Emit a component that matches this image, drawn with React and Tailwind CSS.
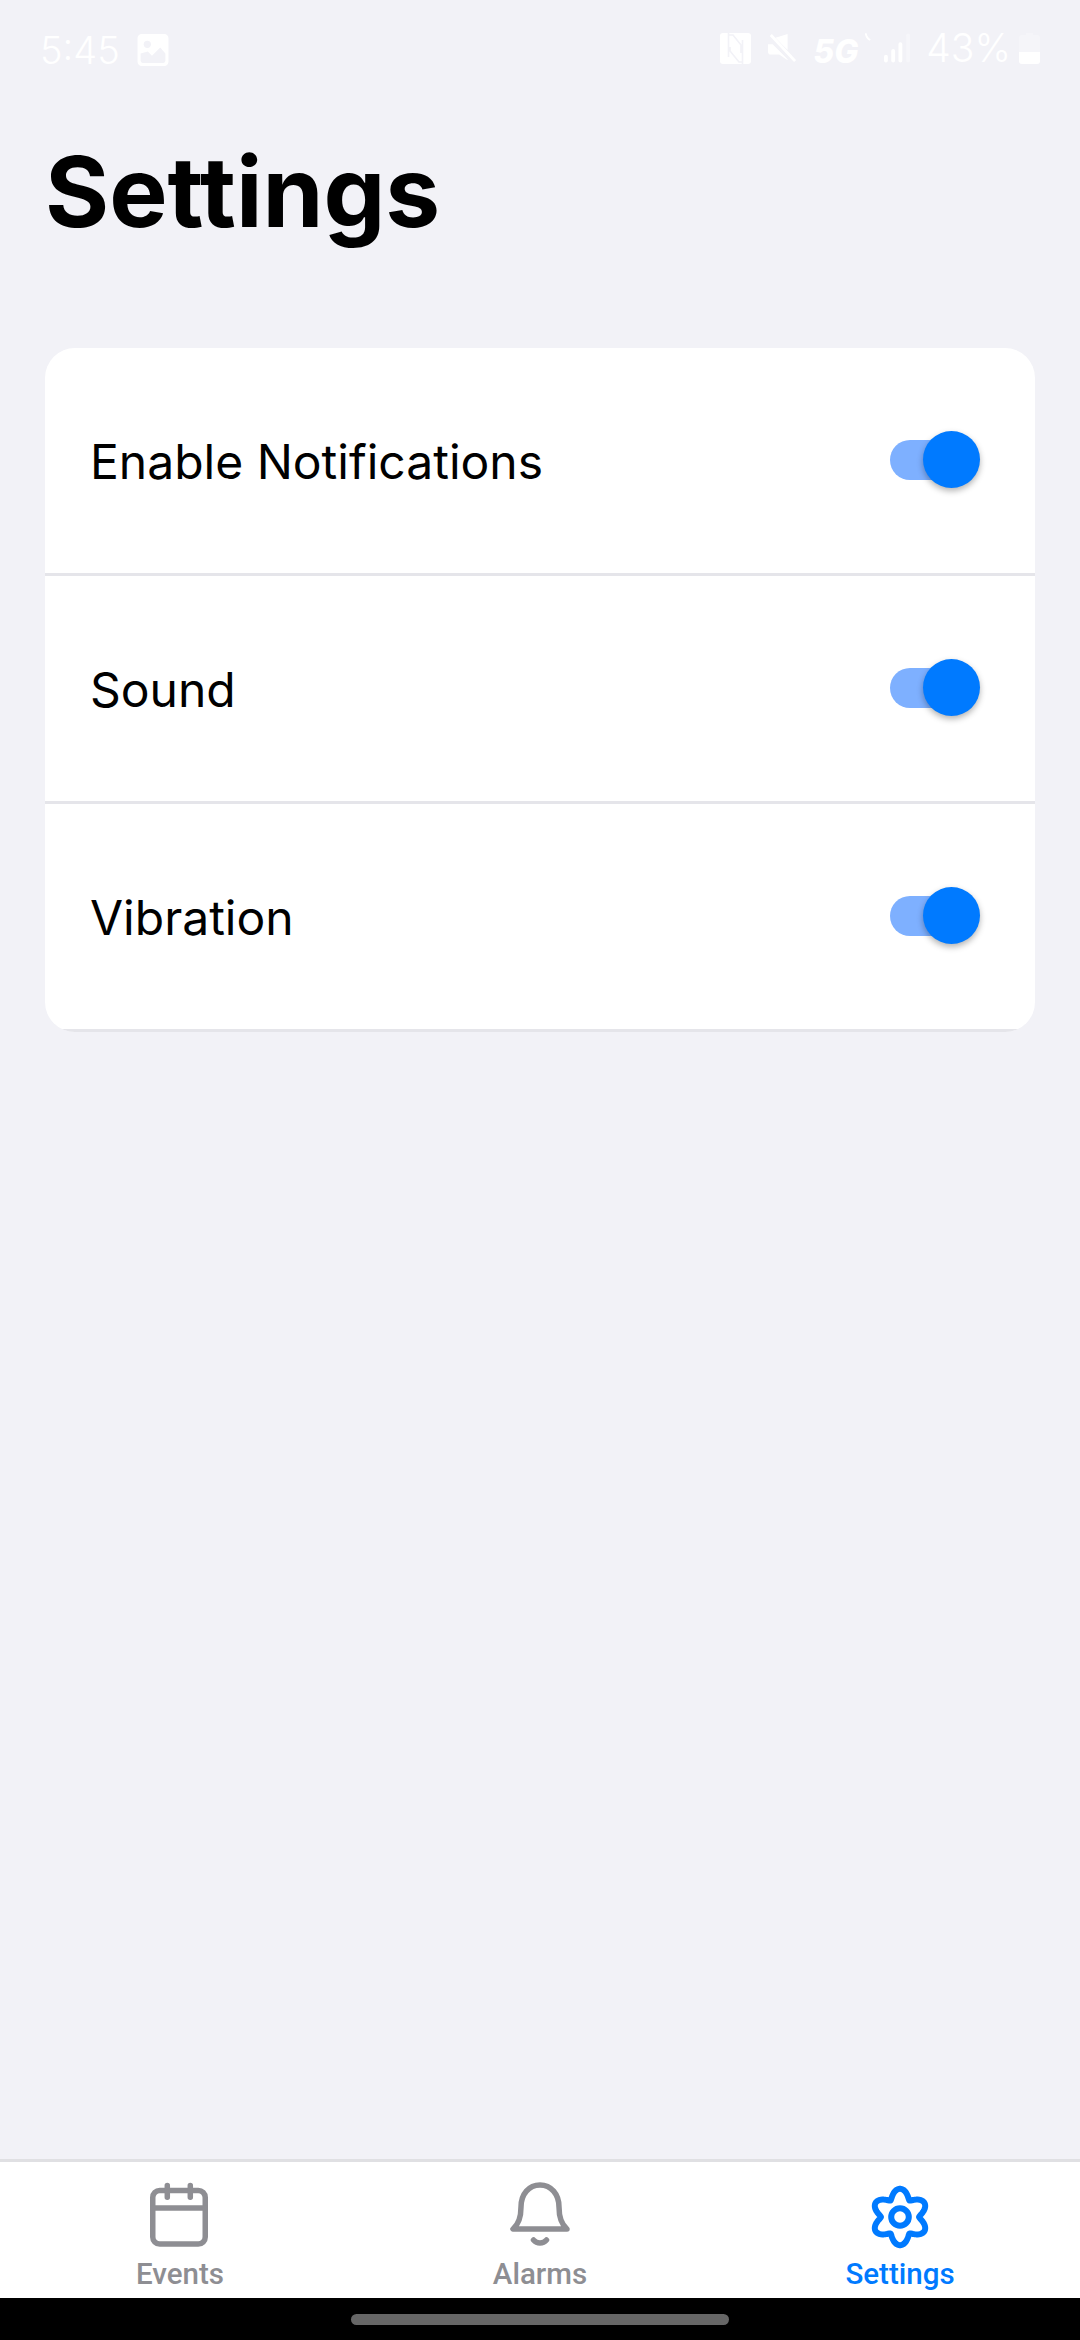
import React from "react";

const gearPath = (() => {
  const pts = [];
  for (let i = 0; i < 240; i++) {
    const t = (i / 240) * Math.PI * 2;
    const c = Math.max(0, (1 + Math.cos(6 * t)) / 2);
    const r = 19 + 9.2 * Math.pow(c, 0.7);
    pts.push(`${(36 + r * Math.sin(t)).toFixed(2)} ${(36 - r * Math.cos(t)).toFixed(2)}`);
  }
  return "M" + pts.join("L") + "Z";
})();

function CalendarIcon() {
  return (
    <svg width="72" height="72" viewBox="0 0 72 72" fill="none" stroke="#8e8e93" strokeWidth="5.5" strokeLinecap="round" strokeLinejoin="round">
      <rect x="8.75" y="9.5" width="52.5" height="53.5" rx="7" />
      <path d="M9 27H61M23.3 4.5V16.3M46.3 4.5V16.3" />
    </svg>
  );
}

function BellIcon() {
  return (
    <svg width="72" height="72" viewBox="0 0 72 72" fill="none" stroke="#8e8e93" strokeWidth="5.5" strokeLinecap="round" strokeLinejoin="round">
      <path d="M9 48H63C57 43 55 36 55 26C55 13 47 4 36 4C25 4 17 13 17 26C17 36 15 43 9 48Z" />
      <path d="M29.5 59C33 63 39 63 42.5 59" />
    </svg>
  );
}

function GearIcon() {
  return (
    <svg width="72" height="72" viewBox="0 0 72 72" fill="none" stroke="#007aff" strokeWidth="6" strokeLinejoin="round">
      <path d={gearPath} />
      <circle cx="36" cy="36" r="8.8" />
    </svg>
  );
}

function Toggle() {
  return (
    <div className="relative mb-[2px] mr-[10px] h-[57px] w-[90px]">
      <div className="absolute left-0 right-[5px] top-[9px] h-[40px] rounded-full bg-[#7eb0ff]" />
      <div className="absolute right-0 top-0 h-[57px] w-[57px] rounded-full bg-[#007aff] shadow-[0_3px_6px_rgba(0,0,0,0.3)]" />
    </div>
  );
}

function Row({ label }) {
  return (
    <div className="flex h-[228px] items-center justify-between border-b-[3px] border-[#e5e5ea] pl-[45px] pr-[45px]">
      <span className="pt-[2px] text-[48px] leading-[58px] text-black">{label}</span>
      <Toggle />
    </div>
  );
}

function Tab({ label, active, children }) {
  return (
    <div className="flex flex-1 flex-col items-center">
      {children}
      <span className={`mt-[3px] text-[29.5px] leading-[36px] font-medium ${active ? "text-[#007aff]" : "text-[#8e8e93]"}`} style={{ fontFamily: "Roboto, sans-serif" }}>
        {label}
      </span>
    </div>
  );
}

function StatusBar() {
  return (
    <div className="flex h-[69px] items-end justify-between pl-[40px] pr-[40px] pb-[1px] text-white">
      <div className="flex items-center gap-[17px]">
        <span className="text-[38px] leading-[36px] font-light">5:45</span>
        <svg width="32" height="32" viewBox="0 0 30 31" fill="#ffffff">
          <path fillRule="evenodd" d="M4 0H26A4 4 0 0 1 30 4V27A4 4 0 0 1 26 31H4A4 4 0 0 1 0 27V4A4 4 0 0 1 4 0ZM3 19V26A2 2 0 0 0 5 28H25A2 2 0 0 0 27 26V19L22 13L14 21L10 17Z" />
          <circle cx="9.5" cy="10" r="3.5" fill="#f2f2f7" />
        </svg>
      </div>
      <div className="flex items-center">
        <svg width="31" height="31" viewBox="0 0 31 31">
          <rect width="31" height="31" rx="3" fill="#ffffff" />
          <path d="M8.5 0V24M22.5 31V7M8.5 2H13L21 12V20M10 14V18L19 29H22" fill="none" stroke="#f2f2f7" strokeWidth="1.6" />
        </svg>
        <svg className="ml-[17px]" width="28" height="31" viewBox="0 0 30 31" fill="#ffffff">
          <path d="M21 0V17L8 4ZM0 11H5L21 27V28L12 22H3A3 3 0 0 1 0 19Z" />
          <path d="M3 1L29 29" stroke="#ffffff" strokeWidth="3" />
        </svg>
        <span className="ml-[17px] mt-[8px] w-[45px] text-[32px] leading-[32px] font-extrabold italic">5G</span>
        <svg className="mb-[22px] ml-[7px]" width="6" height="10" viewBox="0 0 8 10" fill="none" stroke="#ffffff" strokeWidth="2.5">
          <path d="M1 0C1.5 4 3.5 7 7 9" />
        </svg>
        <svg className="ml-[13px]" width="27" height="30" viewBox="0 0 28 30" fill="none" strokeWidth="4" strokeLinecap="round">
          <path d="M2 24V28M9.5 18V28M17 11V28" stroke="#ffffff" />
          <path d="M25 2V28" stroke="#ffffff" strokeOpacity="0.35" />
        </svg>
        <span className="ml-[15px] text-[39px] leading-[36px] font-light">43%</span>
        <svg className="ml-[8px]" width="21" height="31" viewBox="0 0 21 31" fill="#ffffff">
          <path d="M7 0H14V2H18A3 3 0 0 1 21 5V28A3 3 0 0 1 18 31H3A3 3 0 0 1 0 28V5A3 3 0 0 1 3 2H7Z" fillOpacity="0.25" />
          <path d="M0 19H21V28A3 3 0 0 1 18 31H3A3 3 0 0 1 0 28Z" />
        </svg>
      </div>
    </div>
  );
}

export default function App() {
  return (
    <div className="flex h-[2340px] w-[1080px] flex-col overflow-hidden bg-[#f2f2f7]" style={{ fontFamily: "Inter, sans-serif" }}>
      <StatusBar />
      <h1 className="mt-[65px] pl-[45px] text-[98px] leading-[116px] font-bold text-black">Settings</h1>
      <main className="flex-1 px-[45px] pt-[98px]">
        <div className="overflow-hidden rounded-[30px] bg-white">
          <Row label="Enable Notifications" />
          <Row label="Sound" />
          <Row label="Vibration" />
        </div>
      </main>
      <nav className="flex h-[139px] border-t-[3px] border-[#e0e0e3] bg-white pt-[19px]">
        <Tab label="Events"><CalendarIcon /></Tab>
        <Tab label="Alarms"><BellIcon /></Tab>
        <Tab label="Settings" active><GearIcon /></Tab>
      </nav>
      <div className="flex h-[42px] justify-center bg-black pt-[16px]">
        <div className="h-[11px] w-[378px] rounded-full bg-[#666666]" />
      </div>
    </div>
  );
}
